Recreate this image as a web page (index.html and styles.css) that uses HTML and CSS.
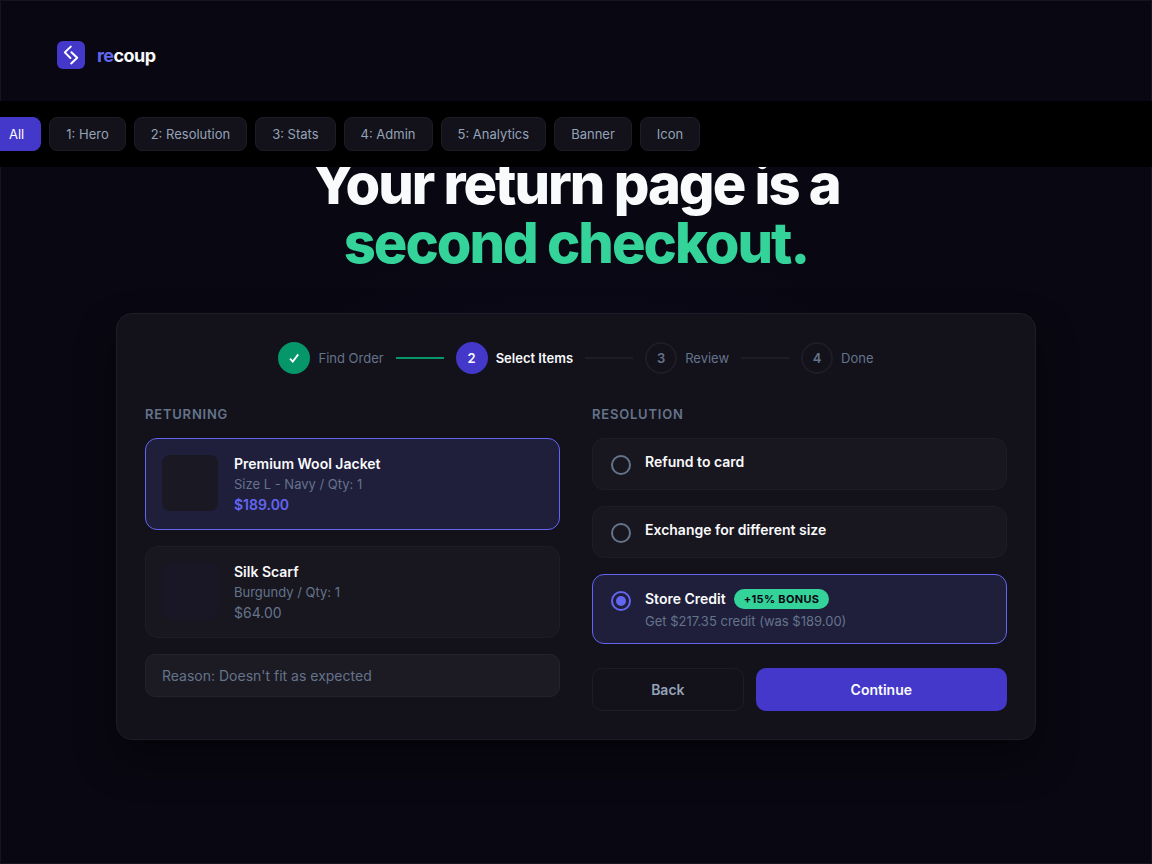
FILE: index.html
```html
<!DOCTYPE html>
<html lang="en">
<head>
  <meta charset="UTF-8">
  <meta name="viewport" content="width=device-width, initial-scale=1.0">
  <title>Recoup - Returns</title>
  <link rel="stylesheet" href="styles.css">
</head>
<body>
  <!-- Slide switcher, stays over the page -->
  <nav class="slide-nav" aria-label="Slides">
    <button type="button" class="nav-btn active">All</button>
    <button type="button" class="nav-btn">1: Hero</button>
    <button type="button" class="nav-btn">2: Resolution</button>
    <button type="button" class="nav-btn">3: Stats</button>
    <button type="button" class="nav-btn">4: Admin</button>
    <button type="button" class="nav-btn">5: Analytics</button>
    <button type="button" class="nav-btn">Banner</button>
    <button type="button" class="nav-btn">Icon</button>
  </nav>

  <div class="slide">
    <header class="logo">
      <svg class="logo-mark" viewBox="0 0 28 28" aria-hidden="true">
        <rect width="28" height="28" rx="6" fill="#4338ca"/>
        <path d="M13.8 5.6 L7.8 11.4 L13.4 17 M14.4 11.2 L20.2 16.8 L14.2 22.4" fill="none" stroke="#fff" stroke-width="2" stroke-linecap="round" stroke-linejoin="round"/>
      </svg>
      <span class="logo-text"><span class="logo-re">re</span>coup</span>
    </header>

    <main class="content">
      <h1>Your return page is a<br><span class="green">second checkout.</span></h1>

      <div class="portal">
        <ol class="steps">
          <li class="step done">
            <span class="step-circle">
              <svg width="14" height="14" viewBox="0 0 14 14" aria-label="Complete">
                <path d="M3 7.6 L5.8 10.6 L11.2 3.4" fill="none" stroke="#fff" stroke-width="1.8"/>
              </svg>
            </span>
            <span class="step-label">Find Order</span>
          </li>
          <li class="step-line done" aria-hidden="true"></li>
          <li class="step current">
            <span class="step-circle">2</span>
            <span class="step-label">Select Items</span>
          </li>
          <li class="step-line" aria-hidden="true"></li>
          <li class="step">
            <span class="step-circle">3</span>
            <span class="step-label">Review</span>
          </li>
          <li class="step-line" aria-hidden="true"></li>
          <li class="step">
            <span class="step-circle">4</span>
            <span class="step-label">Done</span>
          </li>
        </ol>

        <form class="columns">
          <section class="column">
            <h2>Returning</h2>
            <div class="item selected">
              <div class="thumb"></div>
              <div class="item-info">
                <div class="item-name">Premium Wool Jacket</div>
                <div class="item-meta">Size L - Navy / Qty: 1</div>
                <div class="item-price">$189.00</div>
              </div>
            </div>
            <div class="item">
              <div class="thumb thumb-scarf"></div>
              <div class="item-info">
                <div class="item-name">Silk Scarf</div>
                <div class="item-meta">Burgundy / Qty: 1</div>
                <div class="item-price">$64.00</div>
              </div>
            </div>
            <input class="reason" type="text" aria-label="Return reason" value="Reason: Doesn't fit as expected">
          </section>

          <section class="column">
            <h2>Resolution</h2>
            <label class="option">
              <input type="radio" name="resolution">
              <span class="option-title">Refund to card</span>
            </label>
            <label class="option">
              <input type="radio" name="resolution">
              <span class="option-title">Exchange for different size</span>
            </label>
            <label class="option selected">
              <input type="radio" name="resolution" checked>
              <span class="option-body">
                <span class="option-head">
                  <span class="option-title">Store Credit</span>
                  <span class="badge">+15% BONUS</span>
                </span>
                <span class="option-desc">Get $217.35 credit (was $189.00)</span>
              </span>
            </label>
            <div class="actions">
              <button type="button" class="btn btn-back">Back</button>
              <button type="button" class="btn btn-continue">Continue</button>
            </div>
          </section>
        </form>
      </div>
    </main>
  </div>
</body>
</html>
```
FILE: styles.css
```css
:root {
  --bg: #090711;
  --surface: #13111a;
  --surface-2: #18161f;
  --surface-3: #1c1a23;
  --line: #1e1c27;
  --indigo: #4338ca;
  --indigo-light: #6366f1;
  --green: #059669;
  --green-light: #34d399;
  --text: #f8fafc;
  --text-2: #94a3b8;
  --text-3: #64748b;
}

* {
  margin: 0;
  padding: 0;
  box-sizing: border-box;
}

body {
  background: #000;
  color: var(--text);
  font-family: Inter, sans-serif;
  font-size: 14px;
  line-height: 17px;
}

button, input {
  font: inherit;
}

button {
  cursor: pointer;
}

/* Slide switcher */
.slide-nav {
  position: fixed;
  top: 101px;
  left: 0;
  right: 0;
  z-index: 10;
  display: flex;
  gap: 8px;
  padding: 16px 0;
  background: #000;
}

.nav-btn {
  padding: 8px 16px;
  border: 1px solid var(--line);
  border-radius: 8px;
  background: var(--surface);
  color: var(--text-2);
  font-size: 13px;
  line-height: 16px;
}

.nav-btn:first-child {
  margin-left: -8px;
}

.nav-btn.active {
  background: var(--indigo);
  border-color: var(--indigo);
  color: #fff;
}

/* Slide */
.slide {
  display: flex;
  flex-direction: column;
  min-height: 100vh;
  padding: 40px 56px 38px;
  border: 1px solid #16141e;
  background: radial-gradient(ellipse 360px 200px at 50% 50%, rgba(67, 56, 202, 0.08), transparent) var(--bg);
}

.logo {
  display: flex;
  align-items: center;
  gap: 12px;
}

.logo-mark {
  width: 28px;
  height: 28px;
}

.logo-text {
  font-size: 18px;
  font-weight: 700;
  line-height: 23px;
  letter-spacing: -0.03em;
}

.logo-re {
  color: var(--indigo-light);
}

.content {
  flex: 1;
  display: flex;
  flex-direction: column;
  align-items: center;
  justify-content: center;
  gap: 40px;
}

h1 {
  font-size: 56px;
  font-weight: 800;
  line-height: 59px;
  letter-spacing: -2px;
  text-align: center;
}

.green {
  color: var(--green-light);
}

/* Return portal */
.portal {
  width: 100%;
  max-width: 920px;
  padding: 28px;
  border: 1px solid var(--line);
  border-radius: 16px;
  background: var(--surface);
  box-shadow: 0 20px 40px rgba(0, 0, 0, 0.4);
}

.steps {
  display: flex;
  align-items: center;
  justify-content: center;
  gap: 12px;
  margin-bottom: 32px;
  list-style: none;
}

.step {
  display: flex;
  align-items: center;
  gap: 8px;
  color: var(--text-3);
  font-size: 13px;
  line-height: 16px;
}

.step-circle {
  display: flex;
  align-items: center;
  justify-content: center;
  width: 32px;
  height: 32px;
  border: 2px solid var(--line);
  border-radius: 50%;
  font-weight: 600;
}

.step.done .step-circle {
  background: var(--green);
  border-color: var(--green);
}

.step.current .step-circle {
  background: var(--indigo);
  border-color: var(--indigo);
}

.step.current {
  color: var(--text);
  font-weight: 600;
}

.step-line {
  width: 48px;
  height: 2px;
  background: var(--line);
}

.step-line.done {
  background: var(--green);
}

.columns {
  display: grid;
  grid-template-columns: 1fr 1fr;
  gap: 32px;
}

.column {
  display: flex;
  flex-direction: column;
  gap: 16px;
}

h2 {
  color: var(--text-3);
  font-size: 13px;
  font-weight: 600;
  line-height: 16px;
  letter-spacing: 0.06em;
  text-transform: uppercase;
}

.item {
  display: flex;
  gap: 16px;
  padding: 16px;
  border: 1px solid var(--line);
  border-radius: 12px;
  background: var(--surface-2);
}

.item.selected,
.option.selected {
  border-color: var(--indigo-light);
  background: #1f1e3b;
}

.thumb {
  width: 56px;
  height: 56px;
  border-radius: 8px;
  background: #1a1823;
}

.thumb-scarf {
  background: #191725;
}

.item-info {
  display: flex;
  flex-direction: column;
  gap: 4px;
}

.item-name,
.option-title {
  font-weight: 600;
}

.item-meta,
.option-desc {
  color: var(--text-3);
  font-size: 13px;
  line-height: 16px;
}

.item-price {
  color: var(--text-3);
}

.item.selected .item-price {
  color: var(--indigo-light);
  font-weight: 600;
}

.reason {
  width: 100%;
  padding: 12px 16px;
  border: 1px solid #24222d;
  border-radius: 10px;
  background: var(--surface-3);
  color: var(--text-3);
}

.option {
  display: flex;
  align-items: flex-start;
  gap: 14px;
  padding: 14px 18px;
  border: 1px solid var(--line);
  border-radius: 12px;
  background: var(--surface-2);
  cursor: pointer;
}

.option input {
  appearance: none;
  display: grid;
  place-items: center;
  width: 20px;
  height: 20px;
  margin-top: 2px;
  border: 2px solid var(--text-3);
  border-radius: 50%;
}

.option input:checked {
  border-color: var(--indigo-light);
}

.option input:checked::before {
  content: "";
  width: 10px;
  height: 10px;
  border-radius: 50%;
  background: var(--indigo-light);
}

.option-body {
  display: flex;
  flex-direction: column;
  gap: 4px;
}

.option-head {
  display: flex;
  align-items: center;
  gap: 8px;
}

.badge {
  padding: 4px 10px;
  border-radius: 10px;
  background: var(--green-light);
  color: var(--bg);
  font-size: 11px;
  font-weight: 700;
  line-height: 12px;
  letter-spacing: 0.03em;
}

.actions {
  display: flex;
  gap: 12px;
  margin-top: 8px;
}

.btn {
  padding: 12px 24px;
  border: none;
  border-radius: 10px;
  font-weight: 600;
}

.btn-back {
  flex: 1;
  border: 1px solid var(--line);
  background: transparent;
  color: var(--text-2);
}

.btn-continue {
  flex: 2;
  background: var(--indigo);
  color: var(--text);
}
```
